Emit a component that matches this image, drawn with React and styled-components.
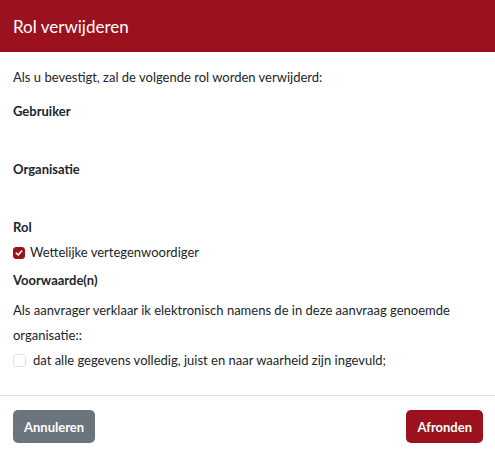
import React from 'react';
import styled, { createGlobalStyle } from 'styled-components';

const GlobalStyle = createGlobalStyle`
  html, body {
    margin: 0;
    padding: 0;
    background: #fff;
  }
  body {
    font-family: Lato, "Liberation Sans", sans-serif;
    color: #212529;
  }
`;

const Modal = styled.div`
  width: 495px;
  height: 455px;
  display: flex;
  flex-direction: column;
  background: #fff;
`;

const Header = styled.div`
  height: 52px;
  background-color: #9b111e;
  display: flex;
  align-items: center;
  padding: 0 13px;
  box-sizing: border-box;
`;

const Title = styled.h5`
  margin: 0;
  color: #fff;
  font-size: 17px;
  font-weight: 400;
`;

const Body = styled.div`
  flex: 1;
  padding: 13px 13px 0;
  font-size: 13px;
  line-height: 25px;
`;

const Text = styled.p`
  margin: 0 0 ${(p) => p.gap ?? 9}px;
`;

const Label = styled.div`
  font-weight: 700;
  margin-bottom: ${(p) => p.gap || 0}px;
`;

const CheckRow = styled.label`
  display: flex;
  align-items: center;
  gap: ${(p) => (p.checked ? 5 : 7)}px;
  margin-bottom: 3px;
`;

const Box = styled.span`
  width: ${(p) => (p.checked ? 12 : 13)}px;
  height: ${(p) => (p.checked ? 12 : 13)}px;
  border-radius: 3px;
  box-sizing: border-box;
  display: inline-flex;
  align-items: center;
  justify-content: center;
  background: ${(p) => (p.checked ? '#9b111e' : '#fff')};
  border: 1px solid ${(p) => (p.checked ? '#9b111e' : '#dee2e6')};
`;

const Footer = styled.div`
  border-top: 1px solid #dee2e6;
  padding: 14px 12px 12px 13px;
  display: flex;
  justify-content: space-between;
`;

const Button = styled.button`
  height: 33px;
  padding: 0 11px;
  border: none;
  border-radius: 5px;
  font-family: inherit;
  font-size: 13px;
  font-weight: 700;
  color: #fff;
  background: ${(p) => (p.primary ? '#9b111e' : '#6c757d')};
`;

function Checkbox({ checked }) {
  return (
    <Box checked={checked}>
      {checked && (
        <svg width="8" height="8" viewBox="0 0 8 8">
          <path d="M1.3 4.2 L3.2 6 L6.7 2" fill="none" stroke="#fff" strokeWidth="1.6" strokeLinecap="round" strokeLinejoin="round" />
        </svg>
      )}
    </Box>
  );
}

export default function App() {
  return (
    <Modal>
      <GlobalStyle />
      <Header>
        <Title>Rol verwijderen</Title>
      </Header>
      <Body>
        <Text>Als u bevestigt, zal de volgende rol worden verwijderd:</Text>
        <Label gap={33}>Gebruiker</Label>
        <Label gap={33}>Organisatie</Label>
        <Label>Rol</Label>
        <CheckRow checked>
          <Checkbox checked />
          Wettelijke vertegenwoordiger
        </CheckRow>
        <Label gap={5}>Voorwaarde(n)</Label>
        <Text gap={0}>
          Als aanvrager verklaar ik elektronisch namens de in deze aanvraag genoemde organisatie::
        </Text>
        <CheckRow>
          <Checkbox />
          dat alle gegevens volledig, juist en naar waarheid zijn ingevuld;
        </CheckRow>
      </Body>
      <Footer>
        <Button>Annuleren</Button>
        <Button primary>Afronden</Button>
      </Footer>
    </Modal>
  );
}
